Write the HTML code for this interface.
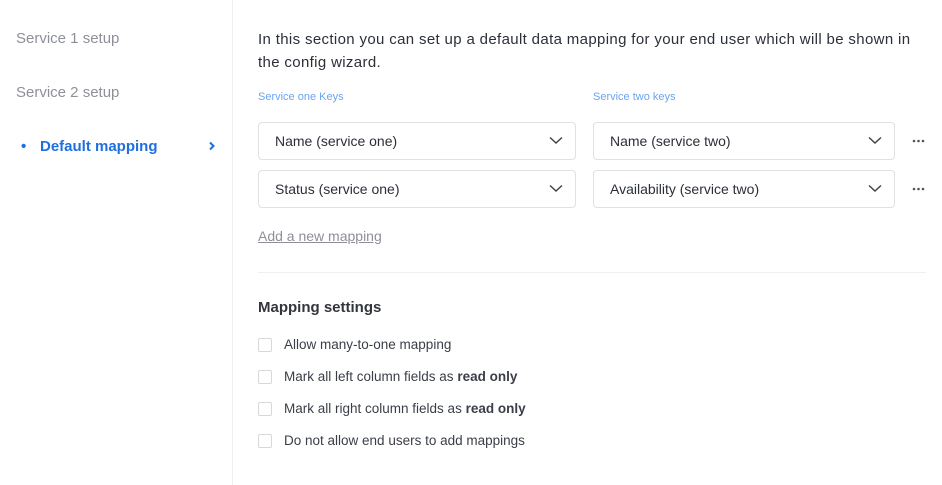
<!DOCTYPE html>
<html><head><style>
body{margin:0;width:942px;height:485px;background:#fff;font-family:"Liberation Sans",sans-serif;color:#2b2f38;position:relative;overflow:hidden}
.a{position:absolute;white-space:nowrap}
.side{position:absolute;left:0;top:0;width:232px;height:485px;border-right:1px solid #eeeff1}
.nav{font-size:15px;color:#8e9098}
.sel{position:absolute;height:38px;border:1px solid #dfe1e5;border-radius:4px;box-sizing:border-box;font-size:14px;line-height:37px;padding-left:16px;color:#2b2f38}
.sel svg{position:absolute;right:12px;top:13px}
.lbl{font-size:11px;color:#6ba4f2}
.cb{position:absolute;left:258px;width:14px;height:14px;border:1px solid #d6d8dc;border-radius:2px;box-sizing:border-box}
.ct{position:absolute;left:284px;font-size:13.5px;color:#3a3e47;white-space:nowrap}
</style></head><body>
<div class="side"></div>
<div class="a nav" style="left:16px;top:30px">Service 1 setup</div>
<div class="a nav" style="left:16px;top:84px">Service 2 setup</div>
<div class="a" style="left:21px;top:138px;font-size:15px;color:#1f6fe0;font-weight:bold">•</div>
<div class="a" style="left:40px;top:138px;font-size:15px;color:#1f6fe0;font-weight:bold">Default mapping</div>
<svg class="a" style="left:208px;top:141px" width="8" height="10"><path d="M2 1.5L5.5 5L2 8.5" stroke="#1f6fe0" stroke-width="2" fill="none"/></svg>
<div class="a" style="left:258px;top:28px;font-size:15px;line-height:23px;color:#2b2f38;white-space:normal;width:665px;letter-spacing:0.35px">In this section you can set up a default data mapping for your end user which will be shown in the config wizard.</div>
<div class="a lbl" style="left:258px;top:91px">Service one Keys</div>
<div class="a lbl" style="left:593px;top:91px">Service two keys</div>
<div class="sel" style="left:258px;top:122px;width:318px">Name (service one)<svg width="14" height="9"><path d="M1 1.5L7 7L13 1.5" stroke="#444" stroke-width="1.5" fill="none"/></svg></div>
<div class="sel" style="left:258px;top:170px;width:318px">Status (service one)<svg width="14" height="9"><path d="M1 1.5L7 7L13 1.5" stroke="#444" stroke-width="1.5" fill="none"/></svg></div>
<div class="sel" style="left:593px;top:122px;width:302px">Name (service two)<svg width="14" height="9"><path d="M1 1.5L7 7L13 1.5" stroke="#444" stroke-width="1.5" fill="none"/></svg></div>
<div class="sel" style="left:593px;top:170px;width:302px">Availability (service two)<svg width="14" height="9"><path d="M1 1.5L7 7L13 1.5" stroke="#444" stroke-width="1.5" fill="none"/></svg></div>
<svg class="a" style="left:912px;top:139px" width="14" height="4"><circle cx="2" cy="2" r="1.3" fill="#555"/><circle cx="6.5" cy="2" r="1.3" fill="#555"/><circle cx="11" cy="2" r="1.3" fill="#555"/></svg>
<svg class="a" style="left:912px;top:187px" width="14" height="4"><circle cx="2" cy="2" r="1.3" fill="#555"/><circle cx="6.5" cy="2" r="1.3" fill="#555"/><circle cx="11" cy="2" r="1.3" fill="#555"/></svg>
<div class="a" style="left:258px;top:228px;font-size:14px;color:#8e9098;text-decoration:underline">Add a new mapping</div>
<div class="a" style="left:258px;top:272px;width:668px;height:1px;background:#eeeff1"></div>
<div class="a" style="left:258px;top:299px;font-size:15px;font-weight:bold;color:#33363d">Mapping settings</div>
<div class="cb" style="top:338px"></div><div class="ct" style="top:337px">Allow many-to-one mapping</div>
<div class="cb" style="top:370px"></div><div class="ct" style="top:369px">Mark all left column fields as <b>read only</b></div>
<div class="cb" style="top:402px"></div><div class="ct" style="top:401px">Mark all right column fields as <b>read only</b></div>
<div class="cb" style="top:434px"></div><div class="ct" style="top:433px">Do not allow end users to add mappings</div>
</body></html>
